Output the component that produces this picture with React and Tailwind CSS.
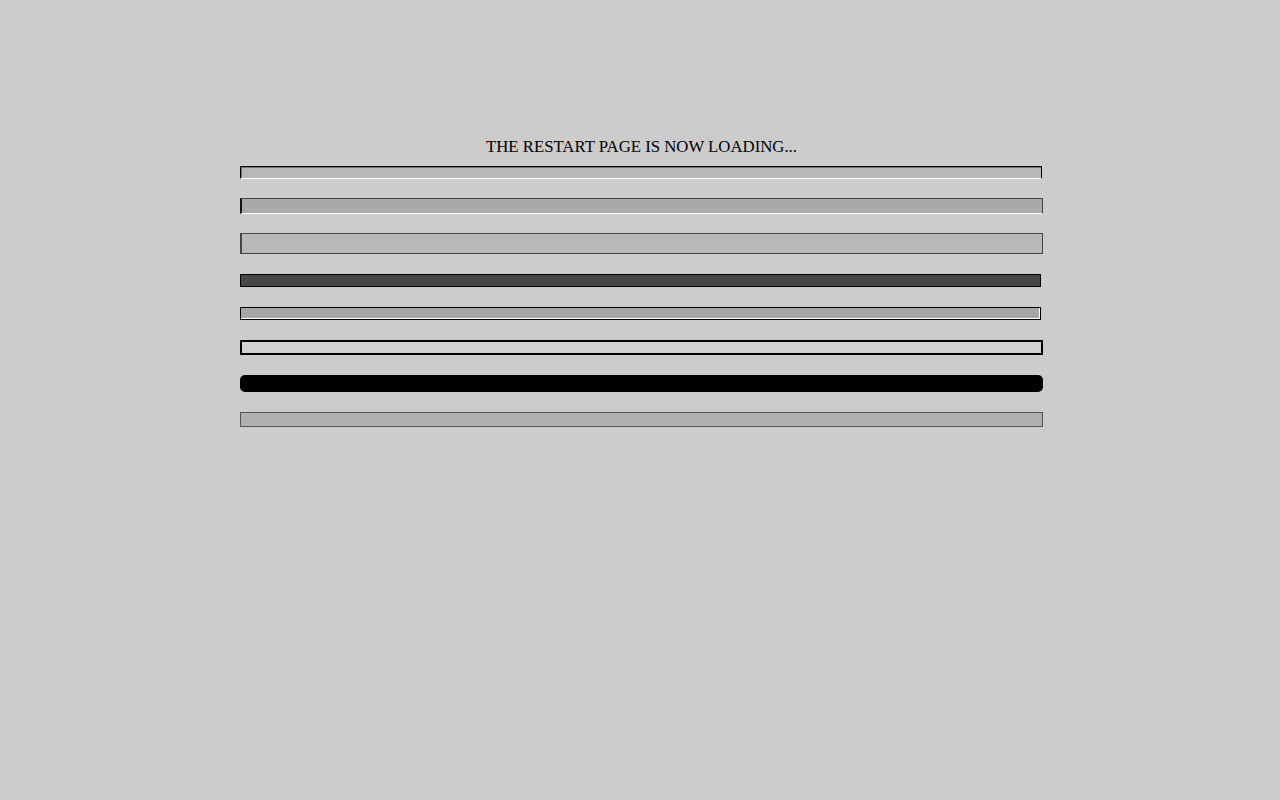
import React from 'react';

const App = () => {
  return (
    <div className="min-h-screen bg-[#cccccc] pt-[138px]" style={{ fontFamily: '"Liberation Serif", serif' }}>
      <div className="w-[803px] ml-[240px] flex flex-col">
        <div className="text-center text-[16.75px] leading-[18px] text-black">THE RESTART PAGE IS NOW LOADING...</div>

        {/* bar 1 */}
        <div className="mt-[10px] h-[13px] w-[802px] border border-black border-b-white bg-[#b8b8b8]">
          <div className="h-full border-t border-l border-[#777]"></div>
        </div>

        {/* bar 2 */}
        <div className="mt-[19px] h-[16px] w-[803px] border border-[#444] border-l-2 border-l-[#111] border-b-white bg-[#a9a9a9]"></div>

        {/* bar 3 */}
        <div className="mt-[19px] h-[21px] w-[803px] border border-[#444] border-l-2 bg-[#b9b9b9]"></div>

        {/* bar 4 */}
        <div className="mt-[20px] h-[13px] w-[801px] border border-black bg-[#474747]"></div>

        {/* bar 5 */}
        <div className="mt-[20px] h-[13px] w-[801px] border border-black bg-[#a6a6a6]">
          <div className="h-full border-b border-r border-white"></div>
        </div>

        {/* bar 6 */}
        <div className="mt-[20px] h-[15px] w-[803px] border-2 border-black bg-[#d2d2d2]"></div>

        {/* bar 7 */}
        <div className="mt-[20px] h-[17px] w-[803px] rounded-[5px] bg-black"></div>

        {/* bar 8 */}
        <div className="mt-[20px] h-[15px] w-[803px] border border-[#555] bg-[#b0b0b0]"></div>
      </div>
    </div>
  );
};

export default App;
